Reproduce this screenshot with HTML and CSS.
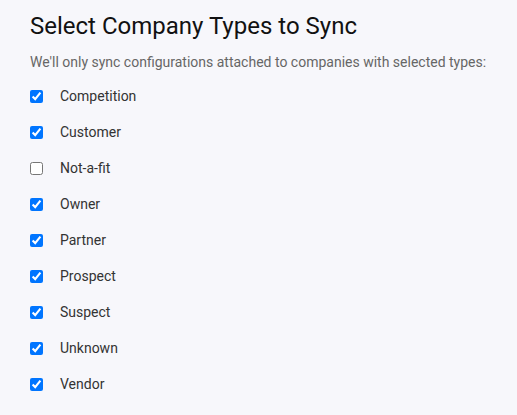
FILE: index.html
```html
<!DOCTYPE html>
<html>
<head>
<meta charset="utf-8">
<link rel="stylesheet" href="styles.css">
</head>
<body>
<div class="panel">
  <h1 class="title">Select Company Types to Sync</h1>
  <p class="subtitle">We'll only sync configurations attached to companies with selected types:</p>
  <ul class="types">
    <li class="type"><input type="checkbox" checked><span>Competition</span></li>
    <li class="type"><input type="checkbox" checked><span>Customer</span></li>
    <li class="type"><input type="checkbox"><span>Not-a-fit</span></li>
    <li class="type"><input type="checkbox" checked><span>Owner</span></li>
    <li class="type"><input type="checkbox" checked><span>Partner</span></li>
    <li class="type"><input type="checkbox" checked><span>Prospect</span></li>
    <li class="type"><input type="checkbox" checked><span>Suspect</span></li>
    <li class="type"><input type="checkbox" checked><span>Unknown</span></li>
    <li class="type"><input type="checkbox" checked><span>Vendor</span></li>
  </ul>
</div>
</body>
</html>
```
FILE: styles.css
```css
html, body {
  margin: 0;
  background: #f7f7fb;
}
body {
  font-family: Roboto, "Liberation Sans", sans-serif;
  color: #222;
}
.panel {
  padding: 12px 30px 0 30px;
}
.title {
  margin: 0;
  font-size: 24px;
  font-weight: 400;
  line-height: 28px;
  color: #111;
}
.subtitle {
  margin: 14px 0 0 0;
  font-size: 14px;
  line-height: 16px;
  color: #666;
}
.types {
  list-style: none;
  margin: 8px 0 0 0;
  padding: 0;
}
.type {
  display: flex;
  align-items: center;
  height: 36px;
  font-size: 14px;
  color: #333;
}
.type input {
  margin: 0 17px 0 0;
  width: 13px;
  height: 13px;
}
```
